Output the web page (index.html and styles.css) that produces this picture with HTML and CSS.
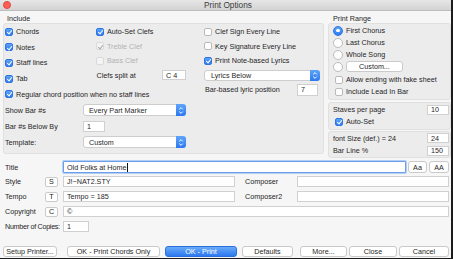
FILE: index.html
```html
<!DOCTYPE html>
<html>
<head>
<meta charset="utf-8">
<link rel="stylesheet" href="styles.css">
</head>
<body>
<div class="window">
  <div class="titlebar"><span class="close"></span><span class="title">Print Options</span><span></span></div>

  <div class="upper">
    <div class="col-left">
      <div class="legend">Include</div>
      <div class="group inc-box">
        <div class="inc-top">
          <div class="c1">
            <div class="chk"><span class="box on"></span>Chords</div>
            <div class="chk"><span class="box on"></span>Notes</div>
            <div class="chk"><span class="box on"></span>Staff lines</div>
            <div class="chk"><span class="box on"></span>Tab</div>
            <div class="chk"><span class="box on"></span>Regular chord position when no staff lines</div>
          </div>
          <div class="c2">
            <div class="chk"><span class="box on"></span>Auto-Set Clefs</div>
            <div class="chk disabled"><span class="box on"></span>Treble Clef</div>
            <div class="chk disabled"><span class="box"></span>Bass Clef</div>
            <div class="frow-inline"><span class="lbl-split">Clefs split at</span><span class="input in-clef">C 4</span></div>
          </div>
          <div class="c3">
            <div class="chk"><span class="box"></span>Clef Sign Every Line</div>
            <div class="chk"><span class="box"></span>Key Signature Every Line</div>
            <div class="chk"><span class="box on"></span>Print Note-based Lyrics</div>
            <div class="frow-inline"><span class="select sel-lyrics">Lyrics Below<span class="stepper"><svg width="10" height="11" viewBox="0 0 10 11"><path d="M3.2 4.4 L5 2.6 L6.8 4.4 M3.2 6.6 L5 8.4 L6.8 6.6" fill="none" stroke="#fff" stroke-width="1"/></svg></span></span></div>
            <div class="frow-inline"><span class="lbl-lyric">Bar-based lyric position</span><span class="input in-lyric">7</span></div>
          </div>
        </div>
        <div class="inc-rows">
          <div class="irow"><span>Show Bar #s</span><span class="select sel-bar">Every Part Marker<span class="stepper"><svg width="10" height="11" viewBox="0 0 10 11"><path d="M3.2 4.4 L5 2.6 L6.8 4.4 M3.2 6.6 L5 8.4 L6.8 6.6" fill="none" stroke="#fff" stroke-width="1"/></svg></span></span></div>
          <div class="irow"><span>Bar #s Below By</span><span class="input in-below">1</span></div>
          <div class="irow"><span>Template:</span><span class="select sel-bar">Custom<span class="stepper"><svg width="10" height="11" viewBox="0 0 10 11"><path d="M3.2 4.4 L5 2.6 L6.8 4.4 M3.2 6.6 L5 8.4 L6.8 6.6" fill="none" stroke="#fff" stroke-width="1"/></svg></span></span></div>
        </div>
      </div>
    </div>

    <div class="col-right">
      <div class="legend legend-r">Print Range</div>
      <div class="group range-box">
        <div class="radio-row"><span class="radio on"></span>First Chorus</div>
        <div class="radio-row"><span class="radio"></span>Last Chorus</div>
        <div class="radio-row"><span class="radio"></span>Whole Song</div>
        <div class="radio-row"><span class="radio"></span><span class="btn btn-custom">Custom...</span></div>
        <div class="chk rchk first"><span class="box"></span>Allow ending with fake sheet</div>
        <div class="chk rchk"><span class="box"></span>Include Lead In Bar</div>
      </div>
      <div class="group staves-box">
        <div class="rrow rrow-staves"><span>Staves per page</span><span class="input in-num">10</span></div>
        <div class="chk rchk"><span class="box on"></span>Auto-Set</div>
      </div>
      <div class="group font-box">
        <div class="rrow"><span>font Size (def.) = 24</span><span class="input in-num">24</span></div>
        <div class="rrow"><span>Bar Line %</span><span class="input in-num">150</span></div>
      </div>
    </div>
  </div>

  <div class="lower">
    <div class="frow frow-title">
      <span class="flabel wide">Title</span>
      <div class="fcell">
        <span class="input in-title">Old Folks at Home<span class="caret"></span></span>
        <span class="btn btn-aa">Aa</span>
        <span class="btn btn-AA">AA</span>
      </div>
    </div>
    <div class="frow">
      <span class="flabel">Style</span><span class="btn btn-small">S</span>
      <div class="fcell">
        <span class="input in-half">J!~NAT2.STY</span>
        <span class="clabel">Composer</span>
        <span class="input in-fill"></span>
      </div>
    </div>
    <div class="frow">
      <span class="flabel">Tempo</span><span class="btn btn-small">T</span>
      <div class="fcell">
        <span class="input in-half">Tempo = 185</span>
        <span class="clabel">Composer2</span>
        <span class="input in-fill"></span>
      </div>
    </div>
    <div class="frow">
      <span class="flabel">Copyright</span><span class="btn btn-small">C</span>
      <div class="fcell">
        <span class="input in-fill">©</span>
      </div>
    </div>
    <div class="frow">
      <span class="flabel wide tight">Number of Copies:</span>
      <div class="fcell">
        <span class="input in-copies">1</span>
      </div>
    </div>
  </div>

  <div class="buttons">
    <span class="btn b-setup">Setup Printer...</span>
    <span class="btn b-chords">OK - Print Chords Only</span>
    <span class="btn primary b-print">OK - Print</span>
    <span class="btn b-defaults">Defaults</span>
    <span class="btn b-more">More...</span>
    <span class="btn b-close">Close</span>
    <span class="btn b-cancel">Cancel</span>
  </div>
</div>
</body>
</html>
```
FILE: styles.css
```css
* { box-sizing: border-box; }
html, body { margin: 0; padding: 0; }
body {
  width: 453px;
  height: 259px;
  overflow: hidden;
  font-family: "Liberation Sans", Arial, sans-serif;
  font-size: 7.2px;
  color: #1f1f1f;
}
.window {
  width: 453px;
  height: 259px;
  background: #f6f6f6;
  border-right: 2px solid #1c1c1c;
  border-bottom: 1px solid #1c1c1c;
  display: flex;
  flex-direction: column;
}
.titlebar {
  height: 11px;
  flex: none;
  background: linear-gradient(#e6e6e6, #d3d3d3);
  border-bottom: 1px solid #bdbdbd;
  display: grid;
  grid-template-columns: 1fr auto 1fr;
  align-items: center;
}
.close {
  width: 8px;
  height: 8px;
  border-radius: 50%;
  background: #fc5f58;
  border: 0.5px solid #de4740;
  margin-left: 3px;
}
.title {
  font-size: 8.3px;
  color: #3c3c3c;
  padding-left: 5px;
}

/* upper */
.upper {
  display: flex;
  gap: 4px;
  padding-left: 3px;
  height: 147px;
  flex: none;
}
.col-left { width: 321px; }
.col-right { width: 123px; }
.legend {
  height: 12px;
  display: flex;
  align-items: flex-end;
  line-height: 9px;
  padding-left: 4px;
}
.legend-r { padding-left: 5px; }
.group {
  background: #ececec;
  border: 1px solid #e0e0e0;
  border-radius: 3px;
}
.inc-box {
  height: 131px;
  padding-left: 1px;
}
.inc-top {
  display: grid;
  grid-template-columns: 91px 108px 1fr;
}
.c2, .c3 { padding-top: 0.5px; }
.chk {
  display: flex;
  align-items: center;
  gap: 3px;
  white-space: nowrap;
}
.c1 .chk { height: 15.6px; }
.c2 > *, .c3 > * { height: 14.5px; }
.frow-inline {
  display: flex;
  align-items: center;
  white-space: nowrap;
}
.box {
  position: relative;
  flex: none;
  width: 8px;
  height: 8px;
  border-radius: 2px;
  background: #fff;
  border: 1px solid #b9b9b9;
}
.box.on {
  background: linear-gradient(#5ba3f9, #2f7cf2);
  border-color: #2d74e0;
}
.box.on::after {
  content: "";
  position: absolute;
  left: 2.2px;
  top: 0.3px;
  width: 2px;
  height: 4.2px;
  border: solid #fff;
  border-width: 0 1.2px 1.2px 0;
  transform: rotate(40deg);
}
.disabled { color: #b2b2b2; }
.disabled .box {
  background: #f4f4f4;
  border-color: #dadada;
}
.disabled .box.on::after { border-color: #a8a8a8; }

.input {
  display: flex;
  align-items: center;
  background: #fff;
  border: 1px solid #d0d0d0;
  padding-left: 3px;
  white-space: nowrap;
  overflow: hidden;
}
.lbl-split { width: 66px; padding-left: 0.5px; }
.in-clef { width: 24px; height: 10px; }
.lbl-lyric { width: 93px; padding-left: 1px; }
.in-lyric { width: 21px; height: 12px; }

.select {
  display: flex;
  align-items: center;
  background: #fff;
  border: 1px solid #cdcdcd;
  border-radius: 3px;
  padding-left: 5px;
  white-space: nowrap;
  position: relative;
}
.stepper {
  margin-left: auto;
  width: 10px;
  align-self: stretch;
  margin-top: -1px;
  margin-bottom: -1px;
  margin-right: -1px;
  background: linear-gradient(#5da5fa, #2c78ef);
  border-radius: 0 3px 3px 0;
  display: flex;
  align-items: center;
  justify-content: center;
}
.stepper svg { display: block; }
.sel-lyrics { width: 116px; height: 11px; padding-left: 6px; }
.sel-bar { width: 103px; height: 12px; }

.inc-rows { margin-top: 0.5px; }
.irow {
  display: grid;
  grid-template-columns: 78px auto;
  align-items: center;
  justify-items: start;
  height: 16px;
}
.in-below { width: 22px; height: 11px; }

/* right column */
.range-box {
  height: 77px;
  padding: 0.5px 0 0 4px;
}
.radio-row {
  display: flex;
  align-items: center;
  gap: 3px;
  height: 12px;
  white-space: nowrap;
}
.radio {
  flex: none;
  width: 10px;
  height: 10px;
  border-radius: 50%;
  background: #fff;
  border: 1px solid #bcbcbc;
  display: flex;
  align-items: center;
  justify-content: center;
}
.radio.on {
  background: linear-gradient(#5ba3f9, #2f7cf2);
  border-color: #2d74e0;
}
.radio.on::after {
  content: "";
  width: 3.5px;
  height: 3.5px;
  border-radius: 50%;
  background: #fff;
}
.rchk {
  height: 11.7px;
  padding-left: 2px;
}
.rchk.first { margin-top: 1.5px; }
.btn {
  display: flex;
  align-items: center;
  justify-content: center;
  background: #fff;
  border: 1px solid #cacaca;
  border-radius: 3px;
  white-space: nowrap;
  color: #262626;
}
.btn-custom { width: 57px; height: 11.7px; }
.staves-box {
  margin-top: 2px;
  height: 28px;
  padding: 0 1px 0 4px;
}
.staves-box .rchk { padding-left: 2px; }
.rrow {
  display: flex;
  align-items: center;
  justify-content: space-between;
  height: 12.5px;
  white-space: nowrap;
}
.rrow-staves { height: 13px; }
.in-num { width: 22px; height: 10px; }
.font-box {
  margin-top: 1px;
  height: 27px;
  padding: 0 1px 0 4px;
}

/* lower */
.lower {
  padding: 3px 2px 0 5px;
  display: flex;
  flex-direction: column;
}
.frow {
  display: grid;
  grid-template-columns: 40px 13px 1fr;
  align-items: center;
  height: 15px;
}
.frow-title { height: 12px; margin-bottom: 1px; }
.flabel { white-space: nowrap; }
.flabel.wide { grid-column: span 2; }
.flabel.tight { letter-spacing: -0.3px; }
.fcell {
  display: flex;
  align-items: center;
  margin-left: 5px;
}
.btn-small { width: 13px; height: 10px; border-radius: 2px; }
.in-title {
  flex: 1;
  height: 12px;
  border: 1px solid #6c9fea;
  box-shadow: 0 0 0 1px #b3cdf4;
  border-radius: 1px;
}
.caret {
  width: 1px;
  height: 9px;
  background: #111;
  margin-left: 0.5px;
}
.btn-aa { width: 19px; height: 12px; margin-left: 2px; }
.btn-AA { width: 20px; height: 12px; margin-left: 2px; }
.in-half { width: 172px; height: 11.5px; }
.clabel { width: 62px; padding-left: 10px; white-space: nowrap; }
.in-fill { flex: 1; height: 11px; }
.in-copies { width: 26px; height: 11px; }

/* buttons */
.buttons {
  margin-top: auto;
  margin-bottom: 1px;
  height: 11px;
  display: flex;
  padding-left: 3px;
}
.buttons .btn { height: 11px; }
.primary {
  background: linear-gradient(#69abf9, #2c78ef);
  border-color: #2b6fdc;
  color: #fff;
}
.b-setup { width: 54px; }
.b-chords { width: 93px; margin-left: 10px; }
.b-print { width: 72px; margin-left: 5px; }
.b-defaults { width: 51px; margin-left: 5px; }
.b-more { width: 47px; margin-left: 7px; }
.b-close { width: 48px; margin-left: 2px; }
.b-cancel { width: 50px; margin-left: 2px; }
```
